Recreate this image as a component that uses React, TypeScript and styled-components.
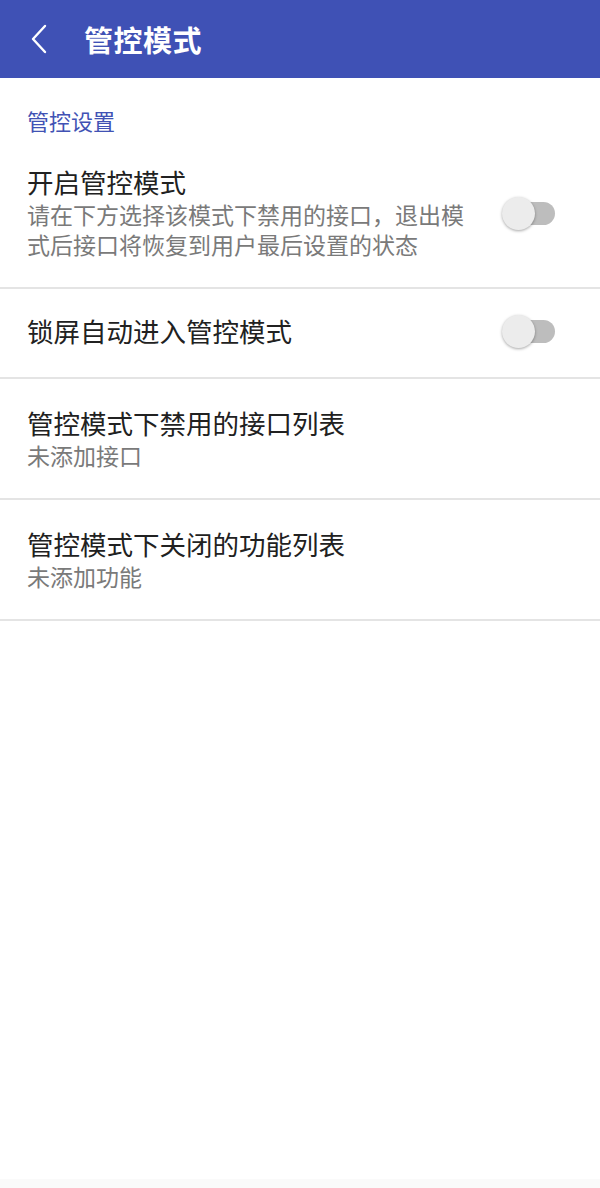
import React from 'react';
import styled, { createGlobalStyle } from 'styled-components';

const GlobalStyle = createGlobalStyle`
    html, body {
        margin: 0;
        padding: 0;
        background: #ffffff;
        font-family: Roboto, "Noto Sans CJK SC", sans-serif;
    }
`;

const Page = styled.div`
    width: 100%;
    height: 100vh;
    display: flex;
    flex-direction: column;
    background: #ffffff;
`;

const AppBar = styled.header`
    height: 78px;
    flex-shrink: 0;
    display: flex;
    align-items: center;
    background: #3f51b5;
    color: #ffffff;
`;

const BackButton = styled.button`
    width: 84px;
    height: 78px;
    padding: 0 0 0 30px;
    border: none;
    background: transparent;
    display: flex;
    align-items: center;
    cursor: pointer;
`;

const Title = styled.h1`
    margin: 0;
    font-size: 29px;
    font-weight: 700;
    letter-spacing: 0.5px;
`;

const Content = styled.main`
    flex: 1;
    display: flex;
    flex-direction: column;
`;

const SectionHeader = styled.div`
    padding: 30px 27px 0;
    font-size: 22px;
    line-height: 30px;
    color: #4152b4;
`;

const Row = styled.div<{ $single?: boolean }>`
    display: flex;
    align-items: center;
    padding: ${(p) => (p.$single ? '27px 45px 27px 27px' : '29px 45px 25px 27px')};
    border-bottom: 2px solid #e4e4e4;
`;

const TextBlock = styled.div`
    flex: 1;
    max-width: 450px;
`;

const RowTitle = styled.div`
    font-size: 26.5px;
    line-height: 34px;
    color: #212121;
`;

const RowSub = styled.div`
    margin-top: 1px;
    font-size: 23px;
    line-height: 30px;
    color: #7a7a7a;
`;

const SwitchTrack = styled.div`
    position: relative;
    margin-left: auto;
    margin-top: -3px;
    width: 52px;
    height: 23px;
    border-radius: 12px;
    background: #bdbdbd;
`;

const SwitchThumb = styled.div`
    position: absolute;
    left: -1px;
    top: -5px;
    width: 33px;
    height: 33px;
    border-radius: 50%;
    background: #ececec;
    box-shadow: 0 1px 3px rgba(0, 0, 0, 0.35);
`;

const NavStrip = styled.div`
    height: 9px;
    flex-shrink: 0;
    background: #fafafa;
`;

const Switch: React.FC = () => (
	<SwitchTrack>
		<SwitchThumb />
	</SwitchTrack>
);

interface RowProps {
	title: string;
	sub?: string;
	toggle?: boolean;
}

const SettingRow: React.FC<RowProps> = ({ title, sub, toggle }) => (
	<Row $single={!sub}>
		<TextBlock>
			<RowTitle>{title}</RowTitle>
			{sub && <RowSub>{sub}</RowSub>}
		</TextBlock>
		{toggle && <Switch />}
	</Row>
);

const App: React.FC = () => {
	return (
		<Page>
			<GlobalStyle />
			<AppBar>
				<BackButton aria-label="back">
					<svg width="20" height="30" viewBox="0 0 20 30">
						<path d="M15 2 L3 15 L15 28" fill="none" stroke="#ffffff" strokeWidth="2.4" strokeLinecap="round" strokeLinejoin="round" />
					</svg>
				</BackButton>
				<Title>管控模式</Title>
			</AppBar>
			<Content>
				<SectionHeader>管控设置</SectionHeader>
				<SettingRow
					title="开启管控模式"
					sub="请在下方选择该模式下禁用的接口，退出模式后接口将恢复到用户最后设置的状态"
					toggle
				/>
				<SettingRow title="锁屏自动进入管控模式" toggle />
				<SettingRow title="管控模式下禁用的接口列表" sub="未添加接口" />
				<SettingRow title="管控模式下关闭的功能列表" sub="未添加功能" />
			</Content>
			<NavStrip />
		</Page>
	);
};

export default App;
